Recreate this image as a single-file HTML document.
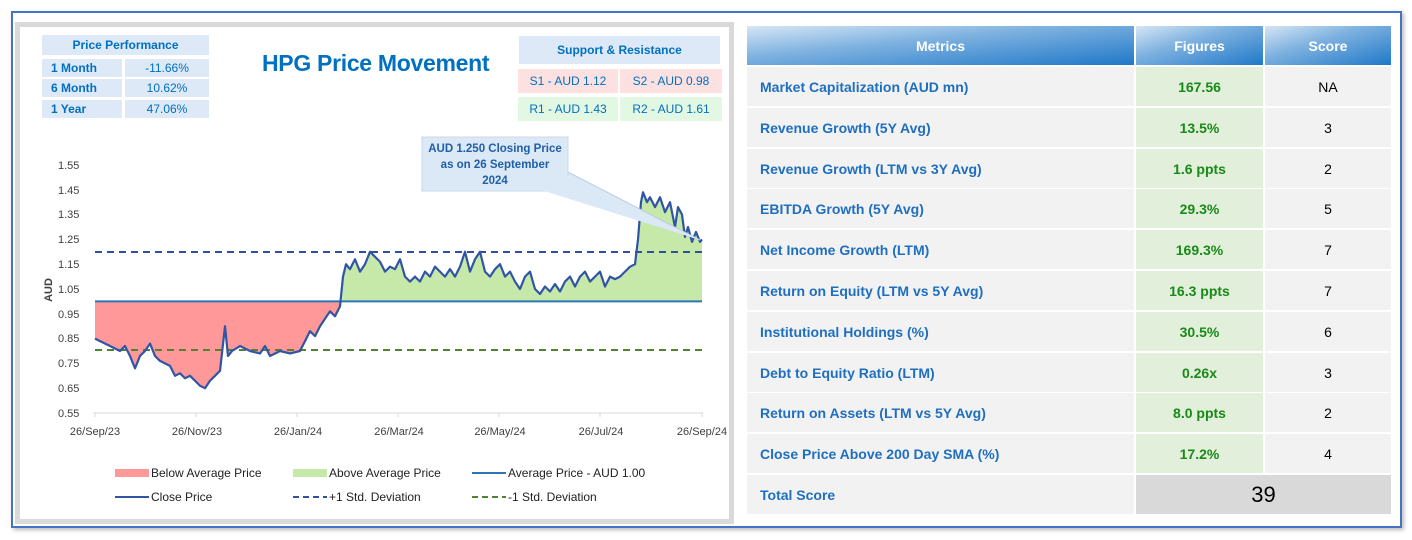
<!DOCTYPE html>
<html><head><meta charset="utf-8"><style>
*{margin:0;padding:0;box-sizing:border-box}
body{width:1412px;height:540px;background:#fff;position:relative;overflow:hidden;font-family:"Liberation Sans",sans-serif}
.a{position:absolute}
.outer{left:11px;top:11px;width:1391px;height:517px;border:2px solid #4472c4;box-shadow:2px 2px 4px #bbb}
.left{left:15px;top:22px;width:719px;height:502px;border:5px solid #d9d9d9;background:#fff}
.c{position:absolute;display:flex;align-items:center;font-size:12px;font-weight:bold;color:#0070c0}
.row{position:absolute;left:747px;width:644px;height:39px}
.cell{position:absolute;top:0;height:39px;display:flex;align-items:center;font-size:14px}
.h{position:absolute;top:26px;height:39px;background:linear-gradient(to bottom right,#d6e6f5 0%,#7fb2e0 40%,#1f78c8 100%);color:#fff;font-weight:bold;font-size:14px;display:flex;align-items:center;justify-content:center}
.m{left:0;width:387px;background:#f2f2f2;padding-left:13px;color:#1f6fc0;font-weight:bold}
.f{left:389px;width:127px;background:#e2efda;justify-content:center;color:#188a18;font-weight:bold}
.s{left:518px;width:126px;background:#f2f2f2;justify-content:center}
</style></head><body>
<div class="a outer"></div>
<div class="a left"></div>

<div class="c" style="left:42px;top:35px;width:167px;height:20px;background:#dde9f6;justify-content:center">Price Performance</div>
<div class="c" style="left:42px;top:59px;width:80px;height:18px;background:#dde9f6;padding-left:9px">1 Month</div>
<div class="c" style="left:125px;top:59px;width:84px;height:18px;background:#dde9f6;justify-content:center;font-weight:normal">-11.66%</div>
<div class="c" style="left:42px;top:79px;width:80px;height:18px;background:#dde9f6;padding-left:9px">6 Month</div>
<div class="c" style="left:125px;top:79px;width:84px;height:18px;background:#dde9f6;justify-content:center;font-weight:normal">10.62%</div>
<div class="c" style="left:42px;top:100px;width:80px;height:18px;background:#dde9f6;padding-left:9px">1 Year</div>
<div class="c" style="left:125px;top:100px;width:84px;height:18px;background:#dde9f6;justify-content:center;font-weight:normal">47.06%</div>

<div class="a" style="left:262px;top:50px;font-size:23px;font-weight:bold;color:#0070c0;letter-spacing:-0.3px">HPG Price Movement</div>

<div class="c" style="left:519px;top:36px;width:201px;height:28px;background:#dde9f6;justify-content:center">Support &amp; Resistance</div>
<div class="c" style="left:518px;top:69px;width:100px;height:24px;background:#fde0e0;justify-content:center;font-weight:normal">S1 - AUD 1.12</div>
<div class="c" style="left:620px;top:69px;width:102px;height:24px;background:#fde0e0;justify-content:center;font-weight:normal">S2 - AUD 0.98</div>
<div class="c" style="left:518px;top:97px;width:100px;height:24px;background:#e2f8e2;justify-content:center;font-weight:normal">R1 - AUD 1.43</div>
<div class="c" style="left:620px;top:97px;width:102px;height:24px;background:#e2f8e2;justify-content:center;font-weight:normal">R2 - AUD 1.61</div>

<svg class="a" style="left:0;top:0" width="740" height="540">
<g font-family="Liberation Sans" font-size="11" fill="#404040">
<text x="58" y="169">1.55</text><text x="58" y="194">1.45</text><text x="58" y="218">1.35</text>
<text x="58" y="243">1.25</text><text x="58" y="268">1.15</text><text x="58" y="293">1.05</text>
<text x="58" y="318">0.95</text><text x="58" y="342">0.85</text><text x="58" y="367">0.75</text>
<text x="58" y="392">0.65</text><text x="58" y="417">0.55</text>
<text x="52" y="290" font-weight="bold" transform="rotate(-90 52 290)" text-anchor="middle">AUD</text>
<g text-anchor="middle">
<text x="95" y="435">26/Sep/23</text><text x="197" y="435">26/Nov/23</text><text x="298" y="435">26/Jan/24</text>
<text x="399" y="435">26/Mar/24</text><text x="500" y="435">26/May/24</text><text x="601" y="435">26/Jul/24</text><text x="702" y="435">26/Sep/24</text>
</g></g>
<line x1="93" y1="413" x2="703" y2="413" stroke="#d9d9d9"/>
<g stroke="#d9d9d9"><line x1="95" y1="413" x2="95" y2="417"/><line x1="196" y1="413" x2="196" y2="417"/><line x1="297" y1="413" x2="297" y2="417"/><line x1="398" y1="413" x2="398" y2="417"/><line x1="499" y1="413" x2="499" y2="417"/><line x1="600" y1="413" x2="600" y2="417"/><line x1="702" y1="413" x2="702" y2="417"/></g>
<g transform="matrix(1 0 0 -248 0 549.4)">
<polygon fill="#ff9999" points="95,1 95,0.85 100,0.84 110,0.82 120,0.80 125,0.82 130,0.78 135,0.73 140,0.78 145,0.80 150,0.83 155,0.78 160,0.76 170,0.74 175,0.70 180,0.71 185,0.69 190,0.70 195,0.68 200,0.66 205,0.65 210,0.68 215,0.70 220,0.72 225,0.90 228,0.78 232,0.80 240,0.82 250,0.80 260,0.79 265,0.82 270,0.78 280,0.80 290,0.79 300,0.80 305,0.84 310,0.88 315,0.86 320,0.90 325,0.93 330,0.96 335,0.94 340,0.98 342,1"/>
<polygon fill="#c6e8a8" points="342,1 343,1.10 346,1.15 350,1.13 355,1.17 360,1.12 365,1.15 370,1.20 375,1.18 380,1.16 385,1.12 390,1.14 395,1.13 400,1.17 405,1.10 410,1.08 415,1.10 420,1.08 425,1.12 430,1.10 435,1.14 440,1.12 445,1.10 450,1.13 455,1.10 460,1.14 465,1.20 470,1.12 475,1.17 480,1.20 485,1.12 490,1.10 495,1.13 500,1.15 505,1.10 510,1.12 515,1.08 520,1.05 525,1.10 530,1.12 535,1.05 540,1.03 545,1.06 550,1.04 555,1.07 560,1.04 565,1.08 570,1.10 575,1.06 580,1.10 585,1.12 590,1.08 595,1.10 600,1.12 605,1.06 610,1.10 615,1.09 620,1.10 625,1.12 630,1.14 635,1.15 638,1.25 641,1.40 643,1.44 647,1.40 650,1.42 655,1.38 660,1.42 665,1.36 670,1.40 675,1.30 678,1.38 682,1.35 685,1.26 688,1.30 692,1.24 696,1.28 700,1.24 702,1.25 702,1"/>
</g>
<line x1="95" y1="301.4" x2="702" y2="301.4" stroke="#2e75b6" stroke-width="2"/>
<line x1="95" y1="252" x2="702" y2="252" stroke="#2f4f9f" stroke-width="2" stroke-dasharray="7 5"/>
<line x1="95" y1="350" x2="702" y2="350" stroke="#548235" stroke-width="2" stroke-dasharray="7 5"/>
<g transform="matrix(1 0 0 -248 0 549.4)">
<polyline fill="none" stroke="#2f55a4" stroke-width="2.2" vector-effect="non-scaling-stroke" stroke-linejoin="round" points="95,0.85 100,0.84 110,0.82 120,0.80 125,0.82 130,0.78 135,0.73 140,0.78 145,0.80 150,0.83 155,0.78 160,0.76 170,0.74 175,0.70 180,0.71 185,0.69 190,0.70 195,0.68 200,0.66 205,0.65 210,0.68 215,0.70 220,0.72 225,0.90 228,0.78 232,0.80 240,0.82 250,0.80 260,0.79 265,0.82 270,0.78 280,0.80 290,0.79 300,0.80 305,0.84 310,0.88 315,0.86 320,0.90 325,0.93 330,0.96 335,0.94 340,0.98 343,1.10 346,1.15 350,1.13 355,1.17 360,1.12 365,1.15 370,1.20 375,1.18 380,1.16 385,1.12 390,1.14 395,1.13 400,1.17 405,1.10 410,1.08 415,1.10 420,1.08 425,1.12 430,1.10 435,1.14 440,1.12 445,1.10 450,1.13 455,1.10 460,1.14 465,1.20 470,1.12 475,1.17 480,1.20 485,1.12 490,1.10 495,1.13 500,1.15 505,1.10 510,1.12 515,1.08 520,1.05 525,1.10 530,1.12 535,1.05 540,1.03 545,1.06 550,1.04 555,1.07 560,1.04 565,1.08 570,1.10 575,1.06 580,1.10 585,1.12 590,1.08 595,1.10 600,1.12 605,1.06 610,1.10 615,1.09 620,1.10 625,1.12 630,1.14 635,1.15 638,1.25 641,1.40 643,1.44 647,1.40 650,1.42 655,1.38 660,1.42 665,1.36 670,1.40 675,1.30 678,1.38 682,1.35 685,1.26 688,1.30 692,1.24 696,1.28 700,1.24 702,1.25"/>
</g>
<polygon points="540,180 568,172 700,240" fill="#dbe8f5" stroke="#b8cde3"/>
<rect x="422" y="137" width="146" height="54" fill="#dbe8f5" stroke="#c8d8ea"/>
<polygon points="541,190 567,175 700,240" fill="#dbe8f5"/>
<g font-family="Liberation Sans" font-size="11.5" font-weight="bold" fill="#1f5fa8" text-anchor="middle">
<text x="495" y="152">AUD 1.250 Closing Price</text><text x="495" y="168">as on 26 September</text><text x="495" y="184">2024</text></g>
<rect x="115" y="469" width="34" height="8" fill="#ff9999"/>
<rect x="293" y="469" width="34" height="8" fill="#c6e8a8"/>
<line x1="472" y1="473" x2="506" y2="473" stroke="#2e75b6" stroke-width="2"/>
<line x1="115" y1="497" x2="149" y2="497" stroke="#2f55a4" stroke-width="2"/>
<line x1="293" y1="497" x2="327" y2="497" stroke="#2f4f9f" stroke-width="2" stroke-dasharray="6 4"/>
<line x1="472" y1="497" x2="506" y2="497" stroke="#548235" stroke-width="2" stroke-dasharray="6 4"/>
<g font-family="Liberation Sans" font-size="12" fill="#222">
<text x="151" y="477">Below Average Price</text><text x="329" y="477">Above Average Price</text><text x="508" y="477">Average Price - AUD 1.00</text>
<text x="151" y="501">Close Price</text><text x="329" y="501">+1 Std. Deviation</text><text x="508" y="501">-1 Std. Deviation</text></g>
</svg>

<div class="h" style="left:747px;width:387px">Metrics</div>
<div class="h" style="left:1136px;width:127px">Figures</div>
<div class="h" style="left:1265px;width:126px">Score</div>

<div class="row" style="top:67px"><div class="cell m">Market Capitalization (AUD mn)</div><div class="cell f">167.56</div><div class="cell s">NA</div></div>
<div class="row" style="top:108px"><div class="cell m">Revenue Growth (5Y Avg)</div><div class="cell f">13.5%</div><div class="cell s">3</div></div>
<div class="row" style="top:149px"><div class="cell m">Revenue Growth (LTM vs 3Y Avg)</div><div class="cell f">1.6 ppts</div><div class="cell s">2</div></div>
<div class="row" style="top:189px"><div class="cell m">EBITDA Growth (5Y Avg)</div><div class="cell f">29.3%</div><div class="cell s">5</div></div>
<div class="row" style="top:230px"><div class="cell m">Net Income Growth (LTM)</div><div class="cell f">169.3%</div><div class="cell s">7</div></div>
<div class="row" style="top:271px"><div class="cell m">Return on Equity (LTM vs 5Y Avg)</div><div class="cell f">16.3 ppts</div><div class="cell s">7</div></div>
<div class="row" style="top:312px"><div class="cell m">Institutional Holdings (%)</div><div class="cell f">30.5%</div><div class="cell s">6</div></div>
<div class="row" style="top:353px"><div class="cell m">Debt to Equity Ratio (LTM)</div><div class="cell f">0.26x</div><div class="cell s">3</div></div>
<div class="row" style="top:393px"><div class="cell m">Return on Assets (LTM vs 5Y Avg)</div><div class="cell f">8.0 ppts</div><div class="cell s">2</div></div>
<div class="row" style="top:434px"><div class="cell m">Close Price Above 200 Day SMA (%)</div><div class="cell f">17.2%</div><div class="cell s">4</div></div>
<div class="row" style="top:475px"><div class="cell m">Total Score</div><div class="cell" style="left:389px;width:255px;background:#d9d9d9;justify-content:center;font-size:22px">39</div></div>
</body></html>
